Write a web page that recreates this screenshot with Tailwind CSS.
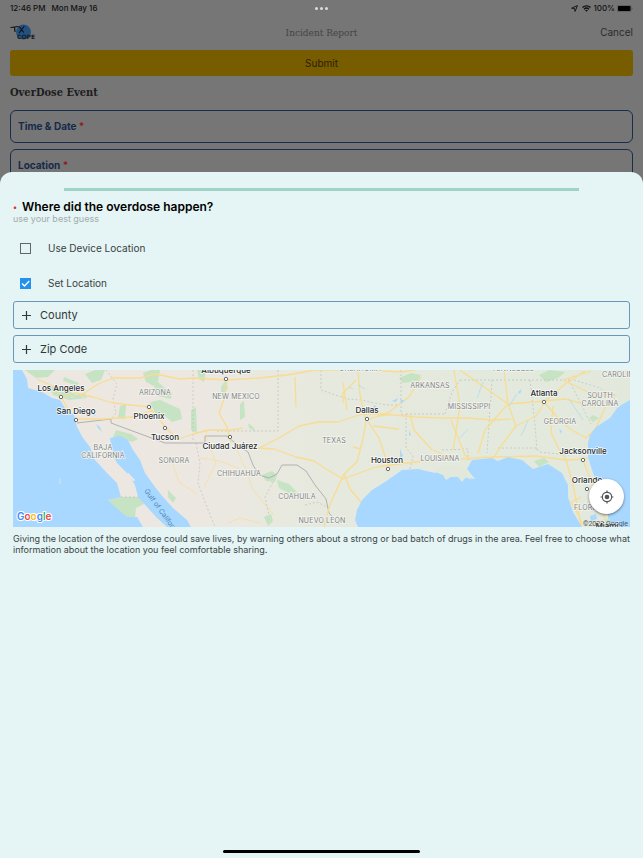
<!DOCTYPE html>
<html lang="en">
<head>
  <meta charset="UTF-8" />
  <meta name="viewport" content="width=device-width, initial-scale=1.0" />
  <title>Incident Report</title>
  <script src="https://cdn.jsdelivr.net/npm/@tailwindcss/browser@4"></script>
</head>
<body class="relative min-h-screen overflow-hidden bg-[#767676] font-['Inter',sans-serif] text-[#222]">

  <!-- Report form, dimmed behind the sheet -->
  <div class="flex flex-col px-[10px]">
    <div class="grid h-4 grid-cols-3 items-center text-[8px] font-medium text-[#111]">
      <div class="flex gap-[6px]"><span>12:46 PM</span><span>Mon May 16</span></div>
      <div class="flex justify-center gap-[2px]">
        <span class="size-[3px] rounded-full bg-[#ddd]"></span>
        <span class="size-[3px] rounded-full bg-[#ddd]"></span>
        <span class="size-[3px] rounded-full bg-[#ddd]"></span>
      </div>
      <div class="flex items-center justify-end gap-[2px]">
        <svg class="size-[7px]" viewBox="0 0 12 12" fill="none" stroke="#111" stroke-width="1.600" stroke-linejoin="round"><path d="M11 1 7 11 6 6 1 5.500Z"/></svg>
        <svg class="ml-[2px] h-[7px] w-[9px]" viewBox="0 0 18 14" fill="none" stroke="#111" stroke-width="2.800"><path d="M1 5a11.500 11.500 0 0 1 16 0M4 8.400a7.300 7.300 0 0 1 10 0"/><path d="M9 13.500 6 10.700a4.400 4.400 0 0 1 6 0Z" fill="#111" stroke="none"/></svg>
        <span>100%</span>
        <svg class="h-[7px] w-[16px]" viewBox="0 0 32 14"><rect x=".5" y=".5" width="28" height="13" rx="3.500" fill="none" stroke="#444"/><rect x="2" y="2" width="25" height="10" rx="2" fill="#000"/><path d="M30 5v4q2-2 0-4" fill="#444"/></svg>
      </div>
    </div>

    <header class="grid h-[34px] grid-cols-3 items-center pb-[2px]">
      <svg class="h-5 w-7" viewBox="0 0 28 20" role="img" aria-label="TX COPE">
        <circle cx="13.500" cy="10" r="7.500" fill="#23517f"/>
        <g fill="none" stroke="#111" stroke-width="1.200" stroke-linecap="round"><path d="M1 5.500 8 4.500M4.500 5.500 5 9.500M9.500 5l4 5M14 4.500l-4.500 6"/></g>
        <text x="7" y="16.500" font-size="6" font-weight="700" fill="#161b20" font-family="DejaVu Sans, sans-serif">COPE</text>
      </svg>
      <h1 class="text-center font-['DejaVu_Serif_Condensed','DejaVu_Serif',serif] text-[10px] text-[#444]">Incident Report</h1>
      <button type="button" class="justify-self-end text-[10px] text-[#2b2b2b]">Cancel</button>
    </header>

    <button type="button" class="h-[26px] rounded-[3px] bg-[#775c00] text-[10px] text-[#2a2208]">Submit</button>
    <h2 class="flex h-[34px] items-center pt-px font-['DejaVu_Serif_Condensed','DejaVu_Serif',serif] text-[11px] font-bold text-[#1d1d1d]">OverDose Event</h2>

    <div class="flex flex-col gap-[6px] text-[10px] font-bold text-[#152b4a]">
      <button type="button" class="h-[33px] rounded-[6px] border border-[#172d4c] px-[7px] text-left">Time &amp; Date <span class="text-[#8d2020]">*</span></button>
      <button type="button" class="h-[33px] rounded-[6px] border border-[#172d4c] px-[7px] text-left">Location <span class="text-[#8d2020]">*</span></button>
    </div>
  </div>

  <!-- Location sheet -->
  <main class="absolute inset-x-0 top-43 bottom-0 flex flex-col rounded-t-[12px] bg-[#e5f4f4] px-[13px] pt-4">
    <div class="h-[3px] w-5/6 self-center bg-[#9fd3ca]"></div>

    <h3 class="mt-[9px] flex items-center gap-[5px] text-[12px] leading-[14px] font-semibold text-black"><span class="w-1 text-[8px] text-[#e03131]">•</span>Where did the overdose happen?</h3>
    <p class="text-[9px] leading-[9px] text-[#a3adad]">use your best guess</p>

    <div class="mt-2 flex flex-col text-[10px] text-[#394242]">
      <label class="flex h-[35px] items-center gap-[17px] pl-[7px]">
        <input type="checkbox" class="size-[11px] appearance-none border border-[#5f6868]" />
        Use Device Location
      </label>
      <label class="flex h-[35px] items-center gap-[17px] pl-[7px]">
        <span class="relative flex">
          <input type="checkbox" checked class="size-[11px] appearance-none bg-[#2492ec]" />
          <svg class="pointer-events-none absolute inset-0 size-[11px]" viewBox="0 0 11 11" fill="none" stroke="#fff" stroke-width="1.300"><path d="m2 5.500 2.500 2.500L9.300 3"/></svg>
        </span>
        Set Location
      </label>
    </div>

    <div class="flex flex-col gap-[6px] text-[11px] text-[#303838]">
      <button type="button" class="flex h-[28px] items-center gap-[9px] rounded-[3px] border border-[#6a97b9] px-2">
        <svg class="size-[9px]" viewBox="0 0 9 9" stroke="#303838" stroke-width="1.200"><path d="M4.500 0v9M0 4.500h9"/></svg>
        County
      </button>
      <button type="button" class="flex h-[28px] items-center gap-[9px] rounded-[3px] border border-[#6a97b9] px-2">
        <svg class="size-[9px]" viewBox="0 0 9 9" stroke="#303838" stroke-width="1.200"><path d="M4.500 0v9M0 4.500h9"/></svg>
        Zip Code
      </button>
    </div>

    <div class="relative mt-[7px]">
      <svg class="block w-full" viewBox="0 0 617 157" role="img" aria-label="Map of the southern United States">
        <defs>
          <linearGradient id="land" x1="0" x2="1" y1="0" y2="0">
            <stop offset=".3" stop-color="#ece8e1"/>
            <stop offset=".52" stop-color="#e6e9de"/>
            <stop offset="1" stop-color="#e2e9dc"/>
          </linearGradient>
        </defs>
        <rect width="617" height="157" fill="url(#land)"/>

        <!-- parks and forests -->
        <g fill="#c6e3c4">
          <path d="M12 0h30l-7 7-12 1zM36 15l15 3 12 7 9-2 2 5-18 2-16-5zM51 7l15 6-2 3-14-5zM72 4l10-4 10 0-4 10-9 3zM130 3l8-3h9l-2 12 9 8 5 3-1 6-13-3-4-10-8-4zM137 32l10-2 20 9 2 10-10 3-8-7-9-2zM107 36l6-2-1 15-7-1zM184 0h9l-2 12-5-3zM178 40l5-3 1 26-6-3zM103 60l15 4 7 5-6 3-13-5-7 3z"/>
          <path d="M95 130l13-3h20l3 7-8 4-1 9-11 2-9-8zM131 109l4-2-1 8-4-1zM155 120l8 8-3 5-5-6zM208 17l4-6 3 6-4 10-3 3zM227 34l4-3 1 16-5 3zM235 53l5 4 3 5-7-4zM249 105l10-4 5 4-2 7-9-1zM264 110l12 4 8 8-4 3-14-7zM251 147l7-3 2 7-5 5zM386 8l12-5 10 2-3 6-15 2zM526 5l10-5 16 2-7 6-12 4zM580 45l6 3-6 4-4-4zM521 91l10-3 5 4-10 5z"/>
        </g>

        <!-- state and country borders -->
        <g fill="none" stroke="#bfc0bd" stroke-width=".7" stroke-dasharray="2 2">
          <path d="M93 0l11 14-4 15 3 14-5 7M180 0v72M265 0v61h-61M308 0v20l14 5 13 4 14 1 12 3 13 2 11 0M388 0v44l5 1v33l7 8-3 13M393 44h38M432 44l7-22 8-12M447 10h112M479 10l-5 73M517 10l5 45 2 25M429 80l26-1v11M485 78h38l3 4 30 3M556 10l22 44M561 10l26 8 16 12M183 73l4 20-2 20 9 24 8 20M108 127h20M260 112l-8 15 4 18M292 135l12-3 14 7"/>
        </g>
        <path d="M64 53l34-4v4l54 20h40v-7h22l8 7 13 9 5 13 6 10 10 3 8-4 5-9 15 0 9 6 9 14 11 14 3 14 10 11" fill="none" stroke="#a9abaa" stroke-width=".9"/>

        <!-- highways -->
        <g fill="none" stroke="#f8dc92" stroke-width="1.300" stroke-linejoin="round">
          <path d="M24 9l18 8 8 10 12-4 18 4 20 6 36 4 8 10 12 14 10 8 14-5 16-4h22l12-2M62 49l28 0 30-2 20-7M48 27l14 24M67 26l18-12 15-6h27l15-4 25 5 13-1 34 2 32-2 28-3 28-5h50l37 2 18-3"/>
          <path d="M214 11l-3 18-5 14 8 14 4 16M245 78l16 1 22 8 18 4 9 6 20 12 33-12 31-4 26-3 16-4M246 78l20-10 20-12 19-4 20 0 24-8h20l33 3 30 1h22l26 2 18-1"/>
          <path d="M353 51l-3 18-6 23-13 12-14 30-6 23M354 50l12 18 5 15 5 15M331 104l6 15 10 12 6 8M345 0l2 25 5 23M330 12l4 28M343 10l-13 13v10M282 7l1 30M354 50l22-8 20-15 12-20M397 44l4 16 9 10 9 10M366 46l12-2M360 56l26 3M340 77l8 2"/>
          <path d="M448 89l30-2 45-1 30 4 18-1 7-2M438 50l14 35 6 5M441 0l6 36-7 44M447 0l48 34 8 22-12 16-12 18M495 34l37-3 20-2 30 8M532 33l12 14 13 12 16 9 10-10 11-25M532 31l20-17 20-13M495 34l-4-34M465 83l7-23 22-25M503 56l20-10 9-14M540 36l-2 27 10 20 5 6 8 30 7 38M570 90l5 13 12 25 5 22M568 127l-10 5 8 14 3 9M550 10l28-9M550 10l29 14 24 1M420 80l18 8"/>
          <path d="M192 59l4 15 7 19-12 24M224 80l10 22 5 16 12 15 10 12M187 88l20 3 20 8M160 95l6 17 18 12M215 153l12-5 20 5" stroke-width=".7"/>
        </g>

        <!-- lakes -->
        <g fill="#acd9fb">
          <path d="M74 40l6 2 3 4-5-2zM83 54l4 3 2 5-4-4zM361 35l3 2-4 1zM379 31l6-3-2 4zM387 79l3 7-3 2zM396 60l2 5-2 1zM505 22l4-3-2 5zM546 59l3 2-1 3zM577 146l6-2 1 5-6 2zM387 29l5 2-4 2z"/>
        </g>
        <path d="M345 15l7 4M336 17l4 2M470 12l-6 16M504 24l-8 12M455 59l-8 9M515 51l-7 15M556 29l14 21M406 13l9 5" stroke="#b6dbee" stroke-width=".9"/>

        <!-- sea -->
        <g fill="#a8d8ff">
          <path d="M0 0H9L14 9 15 18 29 22 39 28 47 30 52 38 61 45 64 57 70 68 77 77 82 90 94 103 104 113 108 127 95 130 102 137 114 147 124 147 130 157H0z"/>
          <path d="M97 68L107 66 115 70 120 80 127 90 132 103 142 117 150 127 160 138 174 150 178 157H154L144 148 134 137 125 127 122 115 114 103 104 93 99 83z"/>
          <path d="M345 157L342 150 344 140 349 130 359 120 372 112 382 105 389 100 405 99 422 103 429 99 435 105 449 107 462 109 454 99 459 90 479 88 485 91 495 87 509 90 520 99 535 94 549 103 555 115 555 127 560 142 569 157z"/>
          <path d="M617 30L605 37 597 48 583 57 577 65 575 73 575 87 580 103 589 123 595 140V157H617z"/>
        </g>
        <path d="M115 103l7 7-2 1-5-5zM58 27h4M68 27h5M47 108v6" fill="#ece8e1" stroke="#ece8e1" stroke-width=".7"/>
        <path d="M422 102l6-6 18 0 8 5 4 9-5-3-4 5-4-5-7 0-5 3-3-5z" fill="#e2e9dc"/>
        <path d="M591 157l1-7 5-2-1 9z" fill="#c9e4cc"/>

        <!-- region labels -->
        <g font-family="Inter, sans-serif" font-size="7" fill="#7f8384" stroke="#f3f4ef" stroke-width="1.500" paint-order="stroke" text-anchor="middle" class="tracking-wide">
          <text x="142" y="25">ARIZONA</text>
          <text x="223" y="29">NEW MEXICO</text>
          <text x="90" y="80">BAJA</text>
          <text x="90" y="88">CALIFORNIA</text>
          <text x="161" y="93">SONORA</text>
          <text x="226" y="106">CHIHUAHUA</text>
          <text x="284" y="129">COAHUILA</text>
          <text x="309" y="153">NUEVO LEÓN</text>
          <text x="321" y="73">TEXAS</text>
          <text x="347" y="1">OKLAHOMA</text>
          <text x="500" y="1">TENNESSEE</text>
          <text x="417" y="18">ARKANSAS</text>
          <text x="456" y="39">MISSISSIPPI</text>
          <text x="427" y="91">LOUISIANA</text>
          <text x="547" y="54">GEORGIA</text>
          <text x="587" y="28">SOUTH</text>
          <text x="587" y="36">CAROLINA</text>
          <text x="589" y="7" text-anchor="start">CAROLINA</text>
          <text x="561" y="140" text-anchor="start">FLORIDA</text>
        </g>
        <text transform="translate(131 121) rotate(54)" font-family="Inter, sans-serif" font-size="7" fill="#4c86b5">Gulf of California</text>

        <!-- cities -->
        <g font-family="Inter, sans-serif" font-size="8" font-weight="500" fill="#262a2c" stroke="#fff" stroke-opacity=".8" stroke-width="1.500" paint-order="stroke" text-anchor="middle">
          <text x="48" y="21">Los Angeles</text>
          <text x="63" y="44">San Diego</text>
          <text x="136" y="49">Phoenix</text>
          <text x="152" y="70">Tucson</text>
          <text x="213" y="3">Albuquerque</text>
          <text x="217" y="79">Ciudad Juárez</text>
          <text x="354" y="43">Dallas</text>
          <text x="374" y="93">Houston</text>
          <text x="531" y="26">Atlanta</text>
          <text x="570" y="84">Jacksonville</text>
          <text x="574" y="113">Orlando</text>
          <text x="594" y="159">Miami</text>
        </g>
        <g fill="#fff" stroke="#555a5c" stroke-width=".9">
          <circle cx="48" cy="27" r="1.700"/><circle cx="63" cy="50" r="1.700"/><circle cx="136" cy="37" r="1.700"/>
          <circle cx="152" cy="58" r="1.700"/><circle cx="213" cy="9" r="1.700"/><circle cx="217" cy="67" r="1.700"/>
          <circle cx="354" cy="49" r="1.700"/><circle cx="375" cy="99" r="1.700"/><circle cx="531" cy="32" r="1.700"/>
          <circle cx="570" cy="90" r="1.700"/><circle cx="574" cy="119" r="1.700"/>
        </g>

        <text x="4" y="150" font-family="Inter, sans-serif" font-size="10" font-weight="600" stroke="#fff" stroke-width="2" stroke-linejoin="round" paint-order="stroke"><tspan fill="#4285f4">G</tspan><tspan fill="#ea4335">o</tspan><tspan fill="#fbbc05">o</tspan><tspan fill="#4285f4">g</tspan><tspan fill="#34a853">l</tspan><tspan fill="#ea4335">e</tspan></text>
        <text x="615" y="156" text-anchor="end" font-family="Roboto, sans-serif" font-size="7" fill="#555">©2022 Google</text>
      </svg>
      <button type="button" aria-label="My location" class="absolute right-[6px] bottom-[13px] flex size-[35px] items-center justify-center rounded-full bg-white shadow-sm shadow-black/40">
        <svg class="size-[14px]" viewBox="0 0 24 24" fill="#555"><path d="M12 8a4 4 0 1 0 0 8 4 4 0 0 0 0-8m8.940 3A9 9 0 0 0 13 3.060V1h-2v2.060A9 9 0 0 0 3.060 11H1v2h2.060A9 9 0 0 0 11 20.940V23h2v-2.060A9 9 0 0 0 20.940 13H23v-2zM12 19a7 7 0 1 1 0-14 7 7 0 0 1 0 14"/></svg>
      </button>
    </div>

    <p class="mt-[6px] text-[9px] leading-[11px] text-[#3a4545]">Giving the location of the overdose could save lives, by warning others about a strong or bad batch of drugs in the area. Feel free to choose what information about the location you feel comfortable sharing.</p>

    <div class="mt-auto mb-[5px] h-[3px] w-[32%] self-center rounded-full bg-black"></div>
  </main>
</body>
</html>
